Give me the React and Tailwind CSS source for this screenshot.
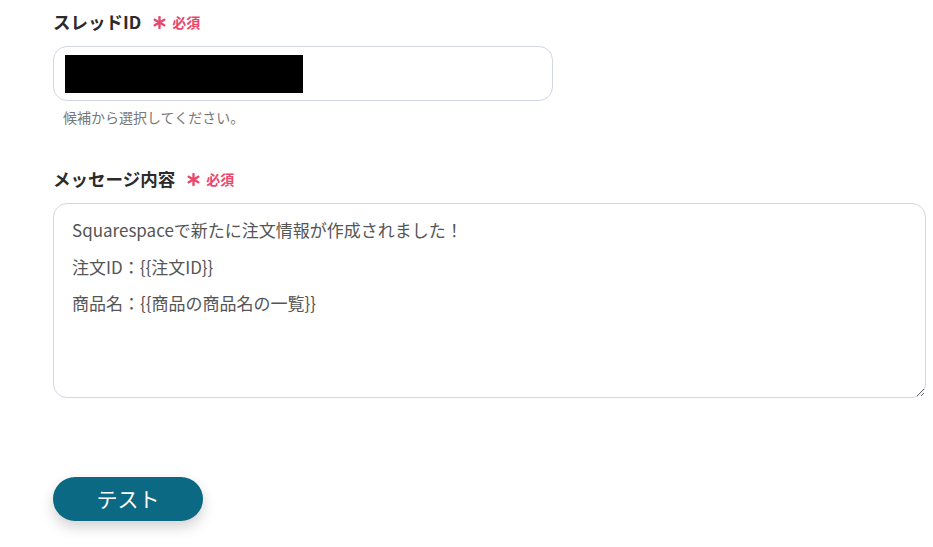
import React from "react";

const Required = () => (
  <span className="ml-3 inline-flex items-center gap-[6px] text-[14px] font-bold text-[#e8486c]">
    <svg width="13" height="13" viewBox="0 0 13 13" className="shrink-0">
      <g stroke="#e8486c" strokeWidth="2.4" strokeLinecap="round">
        <line x1="6.5" y1="1" x2="6.5" y2="12" />
        <line x1="1.7" y1="3.7" x2="11.3" y2="9.3" />
        <line x1="1.7" y1="9.3" x2="11.3" y2="3.7" />
      </g>
    </svg>
    必須
  </span>
);

const Label = ({ children }) => (
  <div className="flex items-center h-[22px]">
    <span className="text-[17.5px] font-bold text-[#2b2b2b]">{children}</span>
    <Required />
  </div>
);

const message =
  "Squarespaceで新たに注文情報が作成されました！\n注文ID：{{注文ID}}\n商品名：{{商品の商品名の一覧}}";

export default function App() {
  return (
    <div
      className="w-[933px] h-[547px] bg-white overflow-hidden relative"
      style={{ fontFamily: '"Noto Sans CJK JP", "Noto Sans", sans-serif' }}
    >
      <div className="pl-[53px] pt-[11px]">
        <Label>スレッドID</Label>
        <div className="mt-[13px] w-[500px] h-[55px] rounded-[14px] border border-[#d3d7e2] flex items-center pl-[11px]">
          <div className="w-[238px] h-[38px] bg-black" />
        </div>
        <p className="mt-[6px] ml-[10px] text-[14px] text-[#777] leading-[20px]">候補から選択してください。</p>

        <div className="mt-[41px]">
          <Label>メッセージ内容</Label>
        </div>
        <textarea
          defaultValue={message}
          className="mt-[13px] block w-[873px] h-[195px] rounded-[14px] border border-[#d3d7e2] pl-[18px] pt-[8px] text-[17px] leading-[36.5px] text-[#555] outline-none"
          style={{ fontFamily: '"Noto Sans CJK JP", "Noto Sans", sans-serif' }}
        />

        <button className="mt-[79px] w-[150px] h-[44px] rounded-full bg-[#0b6983] text-white text-[21px] shadow-[0_6px_14px_rgba(0,0,0,0.18)]">
          テスト
        </button>
      </div>
    </div>
  );
}
